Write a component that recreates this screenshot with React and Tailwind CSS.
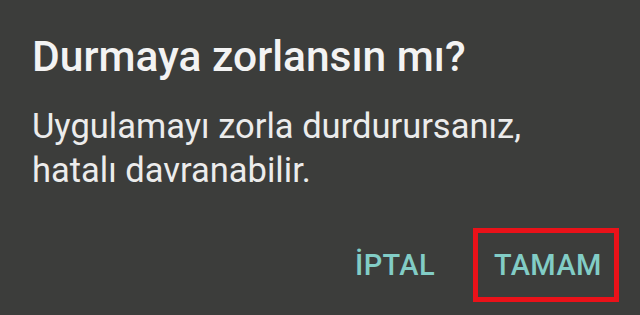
export default function App() {
  return (
    <div
      className="w-[640px] h-[315px] bg-[#3c3d3b] flex flex-col overflow-hidden"
      style={{ fontFamily: "Roboto, 'Noto Sans', sans-serif" }}
    >
      <div className="pl-[32px] pt-[32px]">
        <h1 className="text-[42.5px] leading-[50px] font-medium text-[#f3f3f3]">
          Durmaya zorlansın mı?
        </h1>
        <p className="mt-[22px] text-[34.5px] leading-[44px] text-[#ececec]">
          Uygulamayı zorla durdurursanız,
          <br />
          hatalı davranabilir.
        </p>
      </div>
      <div className="mt-auto mb-[13px] flex items-center justify-end pr-[21px] gap-[38px]">
        <button className="text-[29px] leading-[34px] font-medium text-[#82cdc6] tracking-[0.4px]">İPTAL</button>
        <div className="w-[146px] h-[74px] border-[5px] border-[#ea1219] flex items-center pl-[16px]">
          <button className="text-[29px] leading-[34px] font-medium text-[#82cdc6] tracking-[0.4px]">TAMAM</button>
        </div>
      </div>
    </div>
  );
}
